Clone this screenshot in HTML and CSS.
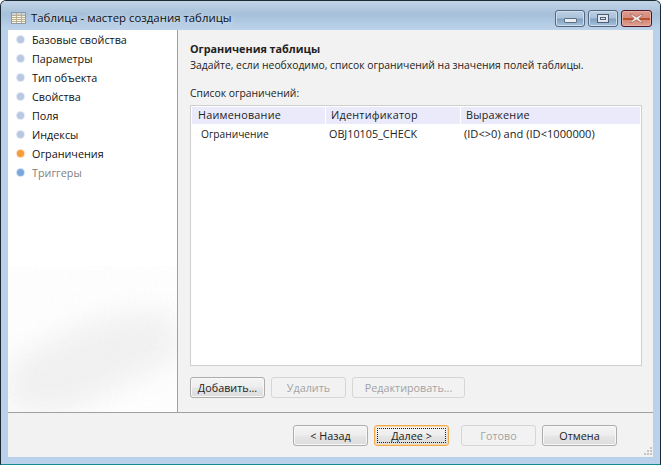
FILE: index.html
```html
<!DOCTYPE html>
<html lang="ru">
<head>
<meta charset="utf-8">
<title>Таблица - мастер создания таблицы</title>
<link rel="stylesheet" href="styles.css">
</head>
<body>
<div class="window">
  <header class="titlebar">
    <svg class="app-icon" width="15" height="12" viewBox="0 0 15 12">
      <rect x="0.5" y="0.5" width="14" height="11" fill="#fbf6e6" stroke="#8f9aa8"/>
      <rect x="1" y="1" width="13" height="2" fill="#c9d3de"/>
      <path d="M1 3.5H14M1 5.5H14M1 7.5H14M1 9.5H14M5.5 1V11M10.5 1V11" stroke="#b9ae90" fill="none"/>
    </svg>
    <span class="title">Таблица - мастер создания таблицы</span>
    <div class="caption">
      <div class="cap cap-min"><span class="glyph-min"></span></div>
      <div class="cap cap-max"><span class="glyph-max"></span></div>
      <div class="cap cap-close">
        <svg width="15" height="9" viewBox="0 0 15 9"><path d="M3 0.5L7.5 3.2L12 0.5H14L9.8 4.5L14 8.5H12L7.5 5.8L3 8.5H1L5.2 4.5L1 0.5Z" fill="#f4f2f0" stroke="#8a5a50" stroke-width="0.6"/></svg>
      </div>
    </div>
  </header>
  <div class="client">
    <div class="main">
      <nav class="steps">
        <svg class="noise" width="169" height="382" viewBox="0 0 169 382">
          <defs>
            <filter id="blur" x="-30%" y="-30%" width="160%" height="160%"><feGaussianBlur stdDeviation="14"/></filter>
            <filter id="grain"><feTurbulence type="fractalNoise" baseFrequency="0.9" numOctaves="2" seed="4"/><feColorMatrix values="0 0 0 0 0.5  0 0 0 0 0.5  0 0 0 0 0.5  0.5 0 0 0 -0.17"/></filter>
          </defs>
          <path d="M0 382V335C25 320 55 300 90 290C120 280 150 280 169 285V330C130 345 95 365 60 382Z" fill="#f2f2f2" filter="url(#blur)"/>
          <rect y="250" width="169" height="132" filter="url(#grain)" opacity="0.3"/>
        </svg>
        <ul class="step-list">
          <li class="step"><i class="dot"></i>Базовые свойства</li>
          <li class="step"><i class="dot"></i>Параметры</li>
          <li class="step"><i class="dot"></i>Тип объекта</li>
          <li class="step"><i class="dot"></i>Свойства</li>
          <li class="step"><i class="dot"></i>Поля</li>
          <li class="step"><i class="dot"></i>Индексы</li>
          <li class="step"><i class="dot dot-active"></i>Ограничения</li>
          <li class="step step-off"><i class="dot dot-next"></i>Триггеры</li>
        </ul>
      </nav>
      <section class="page">
        <h1 class="page-title">Ограничения таблицы</h1>
        <p class="page-desc">Задайте, если необходимо, список ограничений на значения полей таблицы.</p>
        <label class="list-label">Список ограничений:</label>
        <div class="list">
          <div class="list-head">
            <div class="col col-1">Наименование</div>
            <div class="col col-2">Идентификатор</div>
            <div class="col col-3">Выражение</div>
          </div>
          <div class="list-row">
            <div class="cell cell-1">Ограничение</div>
            <div class="cell cell-2">OBJ10105_CHECK</div>
            <div class="cell cell-3">(ID&lt;&gt;0) and (ID&lt;1000000)</div>
          </div>
        </div>
        <div class="list-buttons">
          <button class="btn btn-add">Добавить...</button>
          <button class="btn btn-del" disabled>Удалить</button>
          <button class="btn btn-edit" disabled>Редактировать...</button>
        </div>
      </section>
    </div>
    <footer class="footer">
      <button class="btn btn-nav">&lt; Назад</button>
      <button class="btn btn-nav btn-default"><span class="focus">Далее &gt;</span></button>
      <button class="btn btn-nav btn-done" disabled>Готово</button>
      <button class="btn btn-nav btn-cancel">Отмена</button>
      <svg class="grip" width="8" height="8" viewBox="0 0 8 8"><path d="M6 0h2v2H6zM3 3h2v2H3zM6 3h2v2H6zM0 6h2v2H0zM3 6h2v2H3zM6 6h2v2H6z" fill="#c4c4c4"/></svg>
    </footer>
  </div>
</div>
</body>
</html>
```
FILE: styles.css
```css
* { box-sizing: border-box; }
html, body { margin: 0; padding: 0; width: 661px; height: 465px; overflow: hidden; background: #fff; }
body { font-family: "Open Sans", sans-serif; font-size: 10.8px; color: #1a1a1a; }

.window {
  width: 661px; height: 465px;
  display: flex; flex-direction: column;
  border: 1px solid #1c2a33; border-bottom-color: #0f8a90;
  border-radius: 6px 6px 0 0;
  padding: 0 1px 1px;
  background: #b9d1ea;
  box-shadow: inset 0 1px 0 #d8e6f2;
}
.titlebar {
  height: 29px; flex: none;
  margin: 0 -1px;
  padding: 4px 7px 0 9px;
  display: flex; align-items: center;
  background: linear-gradient(180deg, #c3d5e6 0, #a6c0da 45%, #bcd3ea 100%);
  border-radius: 5px 5px 0 0;
}
.app-icon { flex: none; margin: 0 5px 0 1px; }
.title { flex: 1; font-size: 11.4px; color: #111; text-shadow: 0 0 6px #e6eff7; }
.caption { display: flex; gap: 3px; align-self: flex-start; margin-top: 5px; margin-right: 1px; }
.cap {
  height: 17px; display: flex; align-items: center; justify-content: center;
  border: 1px solid #54677e; border-radius: 3px;
  box-shadow: inset 0 0 0 1px #cfdeec;
  background: linear-gradient(180deg, #bcd0e4 0, #a9c1da 48%, #7f9fc0 52%, #a8c4de 100%);
}
.cap-min, .cap-max { width: 30px; }
.cap-close {
  width: 31px; border-color: #4f1524;
  box-shadow: inset 0 0 0 1px #e5b1a6;
  background: linear-gradient(180deg, #dd9a8e 0, #d78a7c 45%, #b8512d 48%, #b8512d 58%, #d88978 62%, #dea090 100%);
}
.glyph-min { width: 13px; height: 5px; margin-top: 3px; background: #e9eef3; border: 1px solid #5e6f83; border-radius: 1px; }
.glyph-max { width: 12px; height: 9px; background: #dfe6ee; border: 1px solid #4c5d72; box-shadow: inset 0 0 0 2px #dfe6ee, inset 0 0 0 3px #516276; }

.client { flex: 1; margin: 0 6px 6px; display: flex; flex-direction: column; background: #f2f2f2; min-height: 0; }
.main { height: 383px; flex: none; display: flex; border-bottom: 1px solid #a0a0a0; }

.steps { width: 170px; flex: none; position: relative; background: #fff; border-right: 1px solid #a0a0a0; overflow: hidden; }
.noise { position: absolute; left: 0; top: 0; }
.step-list { list-style: none; margin: 0; padding: 0; position: relative; }
.step { height: 19px; display: flex; align-items: center; padding-left: 9px; color: #111; line-height: 19px; }
.dot {
  width: 7px; height: 7px; border-radius: 50%; margin-right: 8px; flex: none;
  background: #b9c8e2; box-shadow: 0 0 0 1px #e2e7f0;
}
.dot-active { background: #f79a3a; box-shadow: 0 0 0 1px #fbdcbc; }
.dot-next { background: #78a7de; box-shadow: 0 0 0 1px #d2e1f3; }
.step-off { color: #808080; }

.page { flex: 1; min-width: 0; padding: 12px 11px 0 12px; display: flex; flex-direction: column; }
.page-title { margin: 0; font-size: 10.8px; line-height: 14px; font-weight: bold; color: #222; }
.page-desc { margin: 2px 0 0; font-size: 10.35px; line-height: 14px; color: #222; }
.list-label { margin-top: 15px; font-size: 10.35px; line-height: 13px; color: #222; }
.list { margin-top: 5px; height: 261px; flex: none; background: #fff; border: 1px solid #cfcfcf; padding: 1px; }
.list-head { height: 17px; display: flex; gap: 1px; }
.col { background: #eaeafb; line-height: 16px; padding-left: 6px; letter-spacing: 0.25px; color: #222; }
.col-1 { width: 133px; }
.col-2 { width: 134px; padding-left: 5px; }
.col-3 { flex: 1; padding-left: 5px; }
.list-row { height: 19px; display: flex; line-height: 20px; color: #222; }
.cell-1 { width: 137px; padding-left: 9px; font-size: 10.2px; }
.cell-2 { width: 135px; }
.cell-3 { flex: 1; font-size: 11.1px; }

.list-buttons { margin-top: 11px; display: flex; gap: 6px; }
.btn {
  height: 21px; padding: 0; font: inherit; color: #222;
  border: 1px solid #adadad; border-radius: 3px;
  background: linear-gradient(180deg, #f4f4f4 0, #eeeeee 48%, #e6e6e6 52%, #dcdcdc 100%);
  box-shadow: inset 0 0 0 1px #f8f8f8;
}
.btn:disabled { background: #f2f2f2; border-color: #d6d6d6; color: #a3a3a3; box-shadow: none; }
.btn-add { width: 75px; }
.btn-del { width: 75px; }
.btn-edit { width: 113px; }

.footer { flex: 1; position: relative; display: flex; justify-content: flex-end; align-items: flex-start; gap: 6px; padding: 12px 36px 0 0; }
.btn-nav { width: 75px; }
.btn-done { margin-left: 6px; }
.btn-default { border-color: #f0a94f; box-shadow: inset 0 0 0 1px #fbd9a5; padding: 2px; display: flex; }
.focus { flex: 1; display: flex; align-items: center; justify-content: center; border: 1px dotted #222; }
.grip { position: absolute; right: 1px; bottom: 2px; }
```
